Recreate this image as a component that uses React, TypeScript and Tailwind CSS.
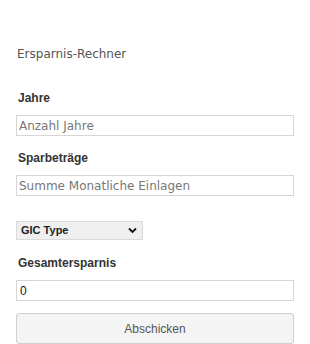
import React, { useState } from 'react';

export default function App() {
  const [years, setYears] = useState('');
  const [amount, setAmount] = useState('');
  const [total] = useState('0');

  return (
    <div className="w-[310px] h-[344px] bg-white px-4 pt-[45px]">
      <h2 className="text-[12px] leading-[18px] text-[#555] font-['DejaVu_Sans',sans-serif] ml-[1px]">
        Ersparnis-Rechner
      </h2>

      <label className="block mt-[26px] text-[12px] leading-[18px] font-bold text-[#333] font-['Liberation_Sans',Arial,sans-serif] ml-[2px]">
        Jahre
      </label>
      <input
        type="text"
        value={years}
        onChange={e => setYears(e.target.value)}
        placeholder="Anzahl Jahre"
        className="block mt-[8px] w-[278px] h-[21px] border border-[#d6d6d6] px-[2px] text-[12px] font-['DejaVu_Sans',sans-serif] placeholder:text-[#777] outline-none"
      />

      <label className="block mt-[13px] text-[12px] leading-[18px] font-bold text-[#333] font-['Liberation_Sans',Arial,sans-serif] ml-[2px]">
        Sparbeträge
      </label>
      <input
        type="text"
        value={amount}
        onChange={e => setAmount(e.target.value)}
        placeholder="Summe Monatliche Einlagen"
        className="block mt-[8px] w-[278px] h-[21px] border border-[#d6d6d6] px-[2px] text-[12px] font-['DejaVu_Sans',sans-serif] placeholder:text-[#777] outline-none"
      />

      <div className="mt-[25px] w-[127px] h-[19px] border border-[#dadada] bg-[#efefef] flex items-center justify-between pl-[4px] pr-[5px]">
        <span className="text-[11px] font-bold text-[#222] font-['Liberation_Sans',Arial,sans-serif]">GIC Type</span>
        <svg width="9" height="7" viewBox="0 0 9 7" fill="none">
          <path d="M1 1.5 L4.5 5 L8 1.5" stroke="#111" strokeWidth="1.8" />
        </svg>
      </div>

      <label className="block mt-[14px] text-[12px] leading-[18px] font-bold text-[#333] font-['Liberation_Sans',Arial,sans-serif] ml-[2px]">
        Gesamtersparnis
      </label>
      <input
        type="text"
        value={total}
        readOnly
        className="block mt-[8px] w-[278px] h-[21px] border border-[#d6d6d6] px-[3px] text-[12px] text-[#111] font-['Liberation_Sans',Arial,sans-serif] outline-none"
      />

      <button
        type="button"
        className="block mt-[12px] w-[278px] h-[31px] rounded-[3px] border border-[#cfcfcf] bg-[#f4f4f4] text-[12px] text-[#555] font-['Liberation_Sans',Arial,sans-serif]"
      >
        Abschicken
      </button>
    </div>
  );
}
